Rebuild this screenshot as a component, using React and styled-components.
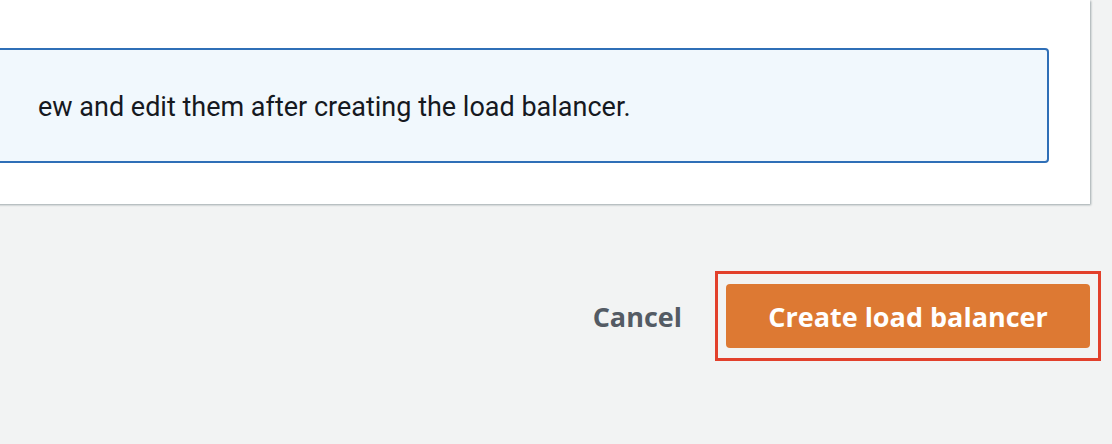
import styled, { createGlobalStyle } from "styled-components";

const GlobalStyle = createGlobalStyle`
  html, body {
    margin: 0;
    padding: 0;
    background: #f2f3f3;
    font-family: "Open Sans", "Noto Sans", sans-serif;
    overflow: hidden;
  }
`;

const Page = styled.div`
  width: 1112px;
  height: 444px;
  display: flex;
  flex-direction: column;
  background: #f2f3f3;
`;

/* the form panel is cropped on the left and top */
const Panel = styled.section`
  background: #ffffff;
  margin: 0 22px 0 -60px;
  padding: 48px 41px 41px 40px;
  box-shadow: 1px 1px 2px rgba(0, 28, 36, 0.35);
`;

const InfoBox = styled.div`
  height: 115px;
  box-sizing: border-box;
  display: flex;
  align-items: center;
  padding: 3px 20px 0 56px;
  background: #f1f8fd;
  border: 2px solid #2f6fb7;
  border-radius: 4px;
  color: #16191f;
  font-family: Roboto, "Open Sans", sans-serif;
  font-size: 27px;
`;

const Footer = styled.div`
  display: flex;
  justify-content: flex-end;
  align-items: center;
  gap: 33px;
  margin-top: 67px;
  padding-right: 11px;
`;

const LinkButton = styled.button`
  border: none;
  background: none;
  padding: 0;
  font-family: inherit;
  font-size: 27px;
  font-weight: 700;
  color: #545b64;
  cursor: pointer;
`;

const Highlight = styled.div`
  border: 3px solid #e2402b;
  padding: 10px 8px;
  display: flex;
`;

const PrimaryButton = styled.button`
  width: 364px;
  height: 64px;
  border: none;
  border-radius: 4px;
  background: #dd7933;
  color: #ffffff;
  font-family: inherit;
  font-size: 27px;
  font-weight: 700;
  cursor: pointer;
`;

export default function App() {
  return (
    <Page>
      <GlobalStyle />
      <Panel>
        <InfoBox>ew and edit them after creating the load balancer.</InfoBox>
      </Panel>
      <Footer>
        <LinkButton>Cancel</LinkButton>
        <Highlight>
          <PrimaryButton>Create load balancer</PrimaryButton>
        </Highlight>
      </Footer>
    </Page>
  );
}
